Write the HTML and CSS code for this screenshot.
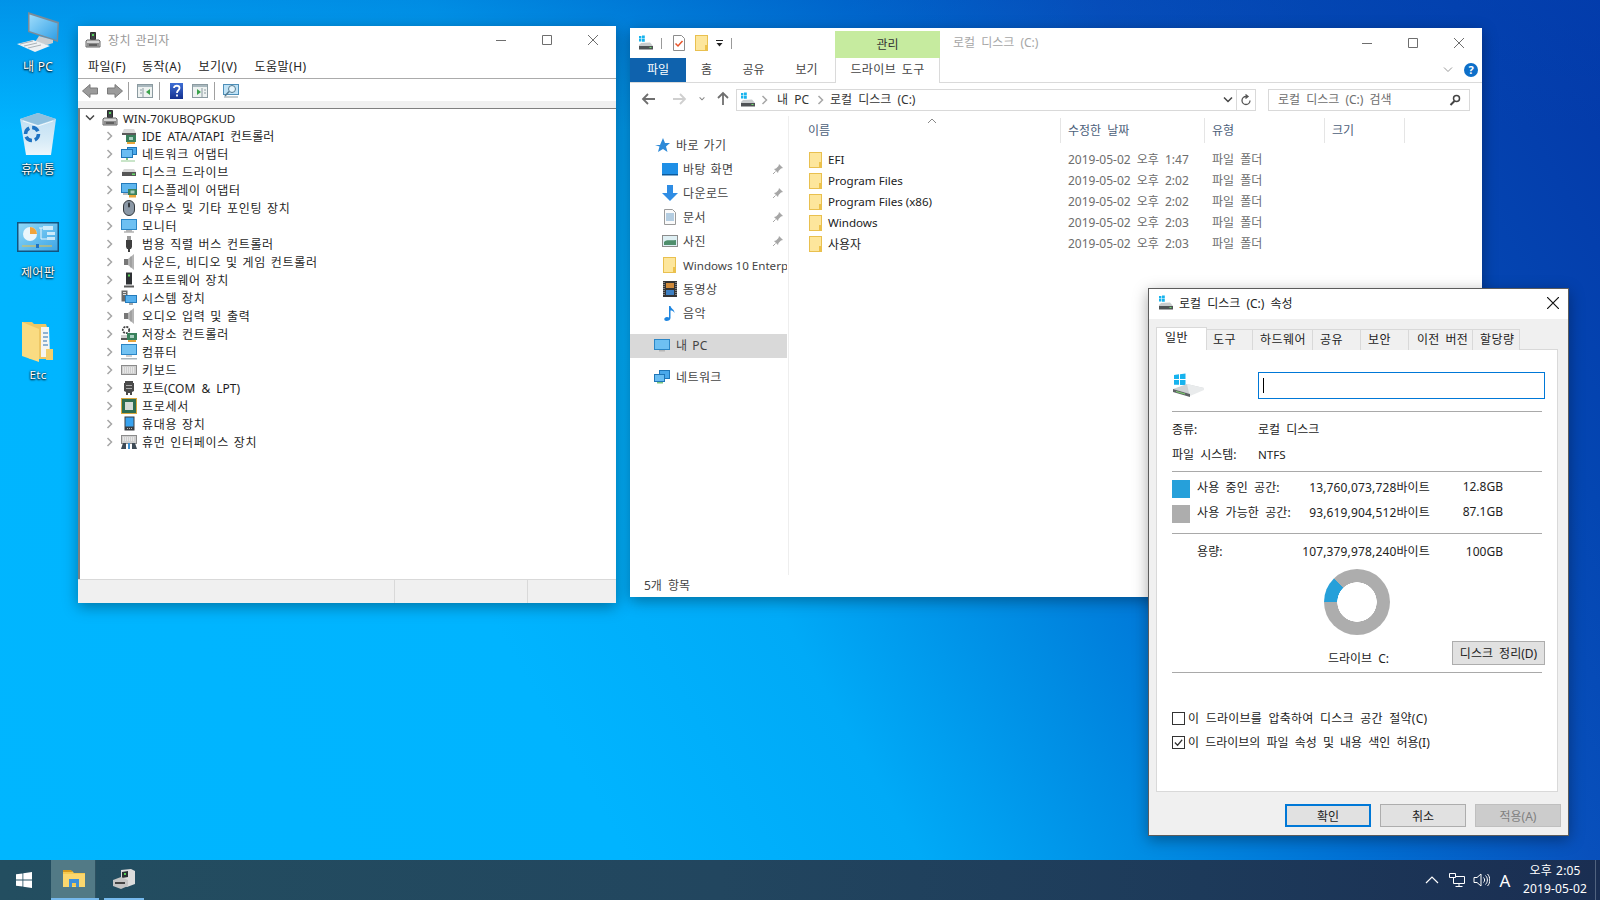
FILE: index.html
```html
<!DOCTYPE html>
<html lang="ko">
<head>
<meta charset="utf-8">
<title>Desktop</title>
<link rel="stylesheet" href="styles.css">
</head>
<body>
<svg class="defs" xmlns="http://www.w3.org/2000/svg">
  <defs>
    <linearGradient id="gScreen" x1="0" y1="0" x2="1" y2="1"><stop offset="0" stop-color="#9fdcfb"/><stop offset="1" stop-color="#2f9fe6"/></linearGradient>
    <linearGradient id="gBin" x1="0" y1="0" x2="0" y2="1"><stop offset="0" stop-color="#b9dcf2"/><stop offset=".65" stop-color="#d7ebf7"/><stop offset="1" stop-color="#eef6fb"/></linearGradient>
    <linearGradient id="gCp" x1="0" y1="0" x2="1" y2="1"><stop offset="0" stop-color="#8fd8f7"/><stop offset="1" stop-color="#3ea6e6"/></linearGradient>
    <linearGradient id="gHelp" x1="0" y1="0" x2="0" y2="1"><stop offset="0" stop-color="#3f6fd6"/><stop offset="1" stop-color="#14308f"/></linearGradient>
    <symbol id="folder" viewBox="0 0 13 16"><rect x=".5" y=".5" width="12" height="15" fill="#fde69c" stroke="#e9c04f"/><path d="M10 10h2v5h-2z" fill="#eec24a"/></symbol>
    <symbol id="drive" viewBox="0 0 16 16"><path d="M1 1h2.400v2.400H1zM4 .6h2.800V3.400H4zM1 4h2.400v2.400H1zM4 4h2.800v2.800H4z" fill="#17b3ee"/><path d="M3 8l9-.5 3 3.500v1.500H1V10z" fill="#c9ccce"/><path d="M1 11h14v3.500H1z" fill="#4f5255"/><path d="M11.500 12h2v1h-2z" fill="#6fe26a"/></symbol>
    <symbol id="devmgr" viewBox="0 0 16 16"><path d="M5.500.5h5v7h-5z" fill="#3f4346" stroke="#2c2c2c"/><path d="M7 2h2v2H7z" fill="#57d05a"/><path d="M2 8h12l1 1v6H1V9z" fill="#d6d6d6" stroke="#666"/><path d="M2 11h12v4H2z" fill="#8d8d8d"/><path d="M4 12.500h8v1H4z" fill="#333"/></symbol>
    <symbol id="ide" viewBox="0 0 16 16"><path d="M3 1h10l2 4H1z" fill="#d8d8d8"/><path d="M1 5h14v2H1z" fill="#5a5a5a"/><path d="M5 7h10v7H5z" fill="#39815c"/><path d="M8 9h4v3H8z" fill="#a8cfc0"/><path d="M6 14h8v2H6z" fill="#e7a53a"/></symbol>
    <symbol id="net" viewBox="0 0 16 16"><rect x="6.500" y="1.500" width="9" height="7" fill="#4aa8ea" stroke="#1f76b8"/><rect x=".5" y="3.500" width="11" height="8" fill="#69bdf2" stroke="#1f76b8"/><path d="M5 12h2v2H5z" fill="#7bc47f"/><path d="M0 14h14v2H0z" fill="#c9e5c9"/></symbol>
    <symbol id="disk" viewBox="0 0 16 16"><path d="M3 5h10l2 3H1z" fill="#d5d5d5"/><path d="M1 8h14v4H1z" fill="#565656"/><path d="M11 9.500h3v1.500h-3z" fill="#66dc66"/></symbol>
    <symbol id="display" viewBox="0 0 16 16"><rect x=".5" y="1.500" width="15" height="9" fill="#5fb6ee" stroke="#247bbb"/><path d="M2 11h5v2H2z" fill="#bcbcbc"/><path d="M7 7h9v6H7z" fill="#39815c"/><path d="M9.500 8.500h4v3h-4z" fill="#a8cfc0"/><path d="M8 13h7v2.500H8z" fill="#e7a53a"/></symbol>
    <symbol id="mouse" viewBox="0 0 16 16"><rect x="2.500" y=".5" width="11" height="15" rx="5.500" fill="#8b98a6" stroke="#33383d"/><rect x="7" y="2.500" width="2" height="5" rx="1" fill="#33383d"/></symbol>
    <symbol id="monitor" viewBox="0 0 16 16"><rect x=".5" y="1.500" width="15" height="10" fill="#6ec0f2" stroke="#2b86c6"/><path d="M5 12h6v1.500H5z" fill="#b5b5b5"/><path d="M3 13.500h10v1H3z" fill="#8c8c8c"/></symbol>
    <symbol id="usb" viewBox="0 0 16 16"><path d="M6 0h4v4H6z" fill="#9a9a9a"/><path d="M5 4h6v7l-1 2H6l-1-2z" fill="#3f3f3f"/><path d="M7 13h2v3H7z" fill="#3f3f3f"/></symbol>
    <symbol id="sound" viewBox="0 0 16 16"><path d="M3 5h4v6H3z" fill="#777"/><path d="M7 5l6-5v16l-6-5z" fill="#b4b4b4"/><path d="M10 2.500v11" stroke="#8d8d8d"/></symbol>
    <symbol id="software" viewBox="0 0 16 16"><path d="M5 .5h6v12H5z" fill="#2e3134"/><path d="M7 2.500h2v2H7z" fill="#5cd45f"/><path d="M3 13.500h10v2H3z" fill="#5a5a5a"/></symbol>
    <symbol id="system" viewBox="0 0 16 16"><path d="M.5.5h6v11h-6z" fill="#6a6a6a"/><path d="M2 2h3v1H2zM2 4h3v1H2z" fill="#ddd"/><rect x="4.500" y="5.500" width="11" height="7" fill="#55b0ee" stroke="#247bbb"/><path d="M8 13h4v2H8z" fill="#aaa"/></symbol>
    <symbol id="storage" viewBox="0 0 16 16"><circle cx="5" cy="4" r="3.200" fill="none" stroke="#444" stroke-width="1.800" stroke-dasharray="2 1"/><path d="M0 9h8v5H0z" fill="#cfcfcf"/><path d="M0 12h8v2H0z" fill="#555"/><path d="M6 7h10v7H6z" fill="#39815c"/><path d="M9 9h4v3H9z" fill="#a8cfc0"/><path d="M7 14h8v2H7z" fill="#e7a53a"/></symbol>
    <symbol id="computer" viewBox="0 0 16 16"><rect x=".5" y=".5" width="15" height="10" fill="#72c2f2" stroke="#2b86c6"/><path d="M5 11h6v2H5z" fill="#cfcfcf"/><path d="M0 14h16v1.500H0z" fill="#a8b4bb"/></symbol>
    <symbol id="keyboard" viewBox="0 0 16 16"><rect x=".5" y="3.500" width="15" height="9" fill="#cfcfcf" stroke="#8b8b8b"/><path d="M2 6h12M2 8h12M2 10h12" stroke="#fff" stroke-dasharray="1 1"/></symbol>
    <symbol id="port" viewBox="0 0 16 16"><path d="M4 1h8v2h1v8l-2 1v3H9v-2H7v2H5v-3l-2-1V3h1z" fill="#4a4a4a"/><path d="M5 5h6v1H5zM5 8h6v1H5z" fill="#a9a9a9"/></symbol>
    <symbol id="cpu" viewBox="0 0 16 16"><rect width="16" height="16" fill="#d9a93f"/><rect x="1" y="1" width="14" height="14" fill="#2f6d50"/><rect x="4" y="4" width="8" height="8" fill="#d5dcd8"/></symbol>
    <symbol id="portable" viewBox="0 0 16 16"><rect x="3.500" y=".5" width="10" height="14" fill="#3a3d40"/><rect x="4.500" y="1.500" width="8" height="9" fill="#38a2ee"/><path d="M6 12h1v1H6zM8 12h1v1H8zM10 12h1v1h-1z" fill="#bbb"/></symbol>
    <symbol id="hid" viewBox="0 0 16 16"><rect x=".5" y="1.500" width="15" height="8" fill="#cfcfcf" stroke="#8b8b8b"/><path d="M2 4h12M2 6h12" stroke="#fff" stroke-dasharray="1 1"/><path d="M2 9h3v6H0zM11 9h3l2 6h-5z" fill="#3e4a55"/><path d="M7 9h2v6H7z" fill="#3d8fd0"/></symbol>
    <symbol id="chev" viewBox="0 0 8 10"><path d="M1.500 1l4 4-4 4" fill="none" stroke="#a6a6a6" stroke-width="1.500"/></symbol>
    <symbol id="chevd" viewBox="0 0 10 8"><path d="M1 1.500l4 4 4-4" fill="none" stroke="#444" stroke-width="1.500"/></symbol>
    <symbol id="min" viewBox="0 0 10 10"><path d="M0 5.500h10" stroke="currentColor"/></symbol>
    <symbol id="max" viewBox="0 0 10 10"><path d="M.5.5h9v9h-9z" fill="none" stroke="currentColor"/></symbol>
    <symbol id="close" viewBox="0 0 10 10"><path d="M0 0l10 10M10 0L0 10" stroke="currentColor" fill="none"/></symbol>
    <symbol id="pin" viewBox="0 0 12 12"><path d="M7 1l4 4-2 .5-2.500 2.500-.5 2-4-4 2-.5L6.500 3z" fill="#a6a6a6"/><path d="M3.500 8.500L1 11" stroke="#a6a6a6"/></symbol>
    <symbol id="arrow" viewBox="0 0 16 16"><path d="M7 3l-5 5 5 5M2 8h12" fill="none" stroke="currentColor" stroke-width="1.800"/></symbol>
    <symbol id="winlogo" viewBox="0 0 16 16"><path d="M0 2.300l6.500-.9v6.200H0zM7.300 1.300L16 0v7.600H7.300zM0 8.400h6.500v6.200L0 13.700zM7.300 8.400H16V16l-8.700-1.200z" fill="#fff"/></symbol>
  </defs>
</svg>

<div class="screen">
  <main class="canvas">
    <a class="dicon d1">
      <svg class="ico-pc" viewBox="0 0 42 40"><path d="M11 0l31 10-1 20-30-10z" fill="#7a8b99"/><path d="M12.500 2.500l28 9-.8 16.500-27.200-9z" fill="url(#gScreen)"/><path d="M22 24l14 4v3l-6 2-12-3z" fill="#c9ced2"/><path d="M0 32l16-4 17 6-15 6z" fill="#eef1f3"/><path d="M3 32l13-3M7 34l13-3M11 36l13-3" stroke="#aab2b8"/></svg>
      <span class="dlabel dl1">내 PC</span>
    </a>
    <a class="dicon d2">
      <svg class="ico-bin" viewBox="0 0 38 43"><path d="M1 7l18-6 18 6-5 36H7z" fill="url(#gBin)"/><path d="M1 7l18 6 18-6-18-6z" fill="#8fc0de"/><path d="M4 9l15 5 15-5" fill="none" stroke="#f0f8fc"/><circle cx="13" cy="22" r="6.500" fill="none" stroke="#1d72c2" stroke-width="3.500" stroke-dasharray="7 3"/></svg>
      <span class="dlabel dl2">휴지통</span>
    </a>
    <a class="dicon d3">
      <svg class="ico-cp" viewBox="0 0 42 30"><rect width="42" height="30" fill="#12547f"/><rect x="1.500" y="1.500" width="39" height="27" fill="url(#gCp)"/><circle cx="13" cy="12" r="7" fill="#e9f6fc"/><path d="M13 12V5a7 7 0 0 1 7 7z" fill="#f0a43c"/><path d="M26 4h10v4H26zM30 10h8v3h-8zM30 15h8v3h-8z" fill="#e9f6fc" opacity=".8"/><path d="M22 6h4M24 6v11h6" stroke="#e9f6fc" fill="none"/><path d="M5 24h30" stroke="#f0c040"/><rect x="19" y="22" width="3" height="4" fill="#1d72c2"/></svg>
      <span class="dlabel dl3">제어판</span>
    </a>
    <a class="dicon d4">
      <svg class="ico-etc" viewBox="0 0 31 41"><path d="M0 1h10l2 2h12l1 3v32H8L0 32z" fill="#eec765"/><path d="M19 6h8l1 30H19z" fill="#f5f5f2"/><path d="M21 12h5M21 16h5M21 20h4M21 24h5" stroke="#6c9cc8" stroke-width="1.500"/><path d="M0 1l17 7v33L0 35z" fill="#fadb82"/><path d="M24 28h7v11H24z" fill="#f3cf6c"/></svg>
      <span class="dlabel dl4 en">Etc</span>
    </a>

    <section class="window devwin">
      <header class="titlebar">
        <svg class="ti16"><use href="#devmgr"/></svg>
        <span class="title-text">장치 관리자</span>
        <div class="wincontrols">
          <span class="wc"><svg class="w10"><use href="#min"/></svg></span>
          <span class="wc"><svg class="w10"><use href="#max"/></svg></span>
          <span class="wc"><svg class="w10"><use href="#close"/></svg></span>
        </div>
      </header>
      <nav class="menubar"><span class="m1">파일(F)</span><span class="m2">동작(A)</span><span class="m3">보기(V)</span><span class="m4">도움말(H)</span></nav>
      <div class="toolbar">
        <svg class="tb tb-first" viewBox="0 0 16 16"><path d="M.5 8L8 1.500V5h7.500v6H8v3.500z" fill="#9b9b9b" stroke="#7b7b7b"/></svg>
        <svg class="tb tb-next" viewBox="0 0 16 16"><path d="M15.500 8L8 1.500V5H.5v6H8v3.500z" fill="#9b9b9b" stroke="#7b7b7b"/></svg>
        <i class="tsep ts1"></i>
        <svg class="tb" viewBox="0 0 16 16"><rect x=".5" y="1.500" width="15" height="13" fill="#eef2f1" stroke="#8b9aa0"/><path d="M1 2h14v2H1z" fill="#a9b8be"/><path d="M6 5v9M3 7h2M3 10h2" stroke="#8b9aa0"/><path d="M13 6v6l-4-3z" fill="#3aa24a"/></svg>
        <i class="tsep"></i>
        <svg class="tb tb-help" viewBox="0 0 14 16"><rect width="13" height="16" fill="url(#gHelp)"/><path d="M4 5c0-3 5.500-3 5.500 0 0 2.500-2.500 2-2.500 5M7 11.500v2" fill="none" stroke="#fff" stroke-width="1.800"/></svg>
        <svg class="tb" viewBox="0 0 16 16"><rect x=".5" y="1.500" width="15" height="13" fill="#eef2f1" stroke="#8b9aa0"/><path d="M1 2h14v2H1z" fill="#a9b8be"/><path d="M10 5v9M12 7h2M12 10h2" stroke="#8b9aa0"/><path d="M5 6v6l4-3z" fill="#3aa24a"/></svg>
        <i class="tsep"></i>
        <svg class="tb" viewBox="0 0 16 16"><rect x=".5" y="1.500" width="15" height="10" fill="#bfe2f6" stroke="#4e8fb8"/><path d="M1 14h14" stroke="#8b9aa0"/><circle cx="9" cy="6" r="3.500" fill="#e6f5fc" stroke="#577c91"/><path d="M6 8.500L2 13" stroke="#577c91" stroke-width="1.500"/></svg>
      </div>
      <div class="band"></div>
      <div class="tree">
        <div class="row root"><svg class="chevd"><use href="#chevd"/></svg><svg class="ti16 tico"><use href="#devmgr"/></svg><span class="en root-text">WIN-70KUBQPGKUD</span></div>
        <div class="row child"><svg class="chev"><use href="#chev"/></svg><svg class="ti16 tico"><use href="#ide"/></svg><span class="txt mix">IDE ATA/ATAPI 컨트롤러</span></div>
        <div class="row child"><svg class="chev"><use href="#chev"/></svg><svg class="ti16 tico"><use href="#net"/></svg><span class="txt">네트워크 어댑터</span></div>
        <div class="row child"><svg class="chev"><use href="#chev"/></svg><svg class="ti16 tico"><use href="#disk"/></svg><span class="txt">디스크 드라이브</span></div>
        <div class="row child"><svg class="chev"><use href="#chev"/></svg><svg class="ti16 tico"><use href="#display"/></svg><span class="txt">디스플레이 어댑터</span></div>
        <div class="row child"><svg class="chev"><use href="#chev"/></svg><svg class="ti16 tico"><use href="#mouse"/></svg><span class="txt">마우스 및 기타 포인팅 장치</span></div>
        <div class="row child"><svg class="chev"><use href="#chev"/></svg><svg class="ti16 tico"><use href="#monitor"/></svg><span class="txt">모니터</span></div>
        <div class="row child"><svg class="chev"><use href="#chev"/></svg><svg class="ti16 tico"><use href="#usb"/></svg><span class="txt">범용 직렬 버스 컨트롤러</span></div>
        <div class="row child"><svg class="chev"><use href="#chev"/></svg><svg class="ti16 tico"><use href="#sound"/></svg><span class="txt">사운드, 비디오 및 게임 컨트롤러</span></div>
        <div class="row child"><svg class="chev"><use href="#chev"/></svg><svg class="ti16 tico"><use href="#software"/></svg><span class="txt">소프트웨어 장치</span></div>
        <div class="row child"><svg class="chev"><use href="#chev"/></svg><svg class="ti16 tico"><use href="#system"/></svg><span class="txt">시스템 장치</span></div>
        <div class="row child"><svg class="chev"><use href="#chev"/></svg><svg class="ti16 tico"><use href="#sound"/></svg><span class="txt">오디오 입력 및 출력</span></div>
        <div class="row child"><svg class="chev"><use href="#chev"/></svg><svg class="ti16 tico"><use href="#storage"/></svg><span class="txt">저장소 컨트롤러</span></div>
        <div class="row child"><svg class="chev"><use href="#chev"/></svg><svg class="ti16 tico"><use href="#computer"/></svg><span class="txt">컴퓨터</span></div>
        <div class="row child"><svg class="chev"><use href="#chev"/></svg><svg class="ti16 tico"><use href="#keyboard"/></svg><span class="txt">키보드</span></div>
        <div class="row child"><svg class="chev"><use href="#chev"/></svg><svg class="ti16 tico"><use href="#port"/></svg><span class="txt mix">포트(COM &amp; LPT)</span></div>
        <div class="row child"><svg class="chev"><use href="#chev"/></svg><svg class="ti16 tico"><use href="#cpu"/></svg><span class="txt">프로세서</span></div>
        <div class="row child"><svg class="chev"><use href="#chev"/></svg><svg class="ti16 tico"><use href="#portable"/></svg><span class="txt">휴대용 장치</span></div>
        <div class="row child"><svg class="chev"><use href="#chev"/></svg><svg class="ti16 tico"><use href="#hid"/></svg><span class="txt">휴먼 인터페이스 장치</span></div>
      </div>
      <footer class="devstatus"><i class="ds1"></i><i class="ds2"></i><i class="ds3"></i></footer>
    </section>

    <section class="window exwin">
      <header class="extitle">
        <div class="qat">
          <svg class="ti16 q-drive"><use href="#drive"/></svg><i class="qsep qs1"></i>
          <svg class="q-check" viewBox="0 0 12 16"><path d="M.5.5h8l3 3v12H.5z" fill="#fff" stroke="#8c8c8c"/><path d="M2.500 8.500l2.500 2.500 4.500-5" fill="none" stroke="#e8542a" stroke-width="1.500"/></svg>
          <svg class="q-folder"><use href="#folder"/></svg>
          <svg class="q-drop" viewBox="0 0 7 7"><path d="M0 0h7v1H0zM.5 3h6L3.500 6.500z" fill="#222"/></svg><i class="qsep qs2"></i>
        </div>
        <div class="manage">관리</div>
        <span class="extitle-text">로컬 디스크 (C:)</span>
        <div class="wincontrols">
          <span class="wc"><svg class="w10"><use href="#min"/></svg></span>
          <span class="wc"><svg class="w10"><use href="#max"/></svg></span>
          <span class="wc"><svg class="w10"><use href="#close"/></svg></span>
        </div>
      </header>
      <div class="ribbontabs">
        <span class="rt rt-file">파일</span><span class="rt rt-home">홈</span><span class="rt rt-share">공유</span><span class="rt rt-view">보기</span><span class="rt rt-tool">드라이브 도구</span>
        <svg class="rib-chev" viewBox="0 0 10 8"><path d="M1 1.500l4 4 4-4" fill="none" stroke="#999"/></svg>
        <span class="rib-help">?</span>
      </div>
      <div class="navrow">
        <svg class="nb nb-back"><use href="#arrow"/></svg>
        <svg class="nb nb-fwd"><use href="#arrow"/></svg>
        <svg class="nb-drop" viewBox="0 0 10 8"><path d="M2 2l3 3 3-3" fill="none" stroke="#888" stroke-width="1.300"/></svg>
        <svg class="nb nb-up"><use href="#arrow"/></svg>
        <div class="addr">
          <svg class="ti16 addr-ico"><use href="#drive"/></svg>
          <svg class="crumb c1st"><use href="#chev"/></svg><span class="c-pc">내 PC</span>
          <svg class="crumb"><use href="#chev"/></svg><span class="c-drive">로컬 디스크 (C:)</span>
          <svg class="addr-chev"><use href="#chevd"/></svg>
          <span class="addr-ref"><svg viewBox="0 0 12 12" class="ref-ico"><path d="M10 6.500A4 4 0 1 1 6 2.500h1M5.500.5L8 2.500 5.500 4.500" fill="none" stroke="#555" stroke-width="1.300"/></svg></span>
        </div>
        <div class="search"><span>로컬 디스크 (C:) 검색</span><svg class="mag" viewBox="0 0 12 12"><circle cx="7.500" cy="4.500" r="3" fill="none" stroke="#444" stroke-width="1.500"/><path d="M5.500 7L1.500 11" stroke="#444" stroke-width="2"/></svg></div>
      </div>
      <div class="exbody">
        <aside class="navpane">
          <div class="np top"><svg class="ni" viewBox="0 0 16 16"><path d="M9 1l2 5h5l-4 3.500 1.500 5.500L9 12l-5 3 1.500-5.500L1 8h5z" fill="#2d8ad8"/></svg><span>바로 가기</span></div>
          <div class="np sub"><svg class="ni" viewBox="0 0 16 16"><rect y="2" width="16" height="11" fill="#1f8fe6"/><path d="M0 13h16v1.500H0z" fill="#0c5a9c"/></svg><span class="fx">바탕 화면</span><svg class="pin"><use href="#pin"/></svg></div>
          <div class="np sub"><svg class="ni" viewBox="0 0 16 16"><path d="M5 0h6v8h5l-8 8-8-8h5z" fill="#2f8de4"/></svg><span class="fx">다운로드</span><svg class="pin"><use href="#pin"/></svg></div>
          <div class="np sub"><svg class="ni" viewBox="0 0 16 16"><path d="M2.500.5h8l3 3v12h-11z" fill="#fafafa" stroke="#9a9a9a"/><path d="M4 5h8M4 7h8M4 9h8M4 11h8" stroke="#6fa0c8"/></svg><span class="fx">문서</span><svg class="pin"><use href="#pin"/></svg></div>
          <div class="np sub"><svg class="ni" viewBox="0 0 16 16"><rect x=".5" y="2.500" width="15" height="11" fill="#dff0f4" stroke="#8c8c8c"/><path d="M2 9c3-3 6-1 12-2v5H2z" fill="#4f8f6c"/></svg><span class="fx">사진</span><svg class="pin"><use href="#pin"/></svg></div>
          <div class="np sub"><svg class="ni-f"><use href="#folder"/></svg><span class="en">Windows 10 Enterprise</span></div>
          <div class="np sub"><svg class="ni" viewBox="0 0 16 16"><rect x="1" width="14" height="16" fill="#333"/><path d="M4 2h8v5H4z" fill="#d08a3a"/><path d="M4 9h8v5H4z" fill="#3d7fc2"/><path d="M2 1v14M14 1v14" stroke="#ccc" stroke-dasharray="1 1"/></svg><span>동영상</span></div>
          <div class="np sub"><svg class="ni" viewBox="0 0 16 16"><path d="M7 1h1.500c.5 3 4 3 4 7-1-2-2.500-2.500-4-2.500V13c0 2-2 3-4 3-3 0-3-4 .5-4 .8 0 1.500.2 2 .6z" fill="#1f86e0"/></svg><span>음악</span></div>
          <div class="np top sel"><svg class="ni" viewBox="0 0 16 16"><rect x=".5" y="1.500" width="15" height="10" fill="#6ec0f2" stroke="#2b86c6"/><path d="M5 12h6v1.500H5z" fill="#b5b5b5"/></svg><span>내 PC</span></div>
          <div class="np top netw"><svg class="ni" viewBox="0 0 16 16"><rect x="5.500" y="1.500" width="10" height="8" fill="#4aa8ea" stroke="#1f76b8"/><rect x=".5" y="5.500" width="10" height="7" fill="#69bdf2" stroke="#1f76b8"/><path d="M3 13h6v1.500H3z" fill="#7bc47f"/></svg><span>네트워크</span></div>
        </aside>
        <div class="list">
          <div class="lhead">
            <span class="lh lh-name">이름<svg class="sortcaret" viewBox="0 0 10 6"><path d="M1 5l4-4 4 4" fill="none" stroke="#888"/></svg></span>
            <span class="lh">수정한 날짜</span><span class="lh">유형</span><span class="lh">크기</span>
          </div>
          <div class="lrow"><span class="lname"><svg class="lf"><use href="#folder"/></svg><span class="en">EFI</span></span><span class="lcell">2019-05-02 오후 1:47</span><span class="lcell">파일 폴더</span></div>
          <div class="lrow"><span class="lname"><svg class="lf"><use href="#folder"/></svg><span class="en">Program Files</span></span><span class="lcell">2019-05-02 오후 2:02</span><span class="lcell">파일 폴더</span></div>
          <div class="lrow"><span class="lname"><svg class="lf"><use href="#folder"/></svg><span class="en">Program Files (x86)</span></span><span class="lcell">2019-05-02 오후 2:02</span><span class="lcell">파일 폴더</span></div>
          <div class="lrow"><span class="lname"><svg class="lf"><use href="#folder"/></svg><span class="en">Windows</span></span><span class="lcell">2019-05-02 오후 2:03</span><span class="lcell">파일 폴더</span></div>
          <div class="lrow"><span class="lname"><svg class="lf"><use href="#folder"/></svg><span>사용자</span></span><span class="lcell">2019-05-02 오후 2:03</span><span class="lcell">파일 폴더</span></div>
        </div>
      </div>
      <footer class="exstatus">5개 항목</footer>
    </section>

    <section class="dialog">
      <header class="dtitle">
        <svg class="ti16"><use href="#drive"/></svg>
        <span class="dtitle-text">로컬 디스크 (C:) 속성</span>
        <span class="dclose"><svg class="w12"><use href="#close"/></svg></span>
      </header>
      <div class="dtabs">
        <span class="dt active">일반</span><span class="dt w46">도구</span><span class="dt w60">하드웨어</span><span class="dt w48">공유</span><span class="dt w48">보안</span><span class="dt w64">이전 버전</span><span class="dt w47">할당량</span>
      </div>
      <div class="panel">
        <div class="phead">
          <svg class="bigdrive" viewBox="0 0 32 27"><path d="M1 3l5-.7V7H1zM7 2.200l5.500-.8V7H7zM1 8h5v4.800H1zM7 8h5.500v5H7z" fill="#17b3ee"/><path d="M0 17l14-5 17 4-14 6z" fill="#cfd2d4"/><path d="M14 12l17 4v2l-14 6-1-3z" fill="#e9ebec"/><path d="M0 17l17 5v3L0 20z" fill="#5e6265"/><path d="M3 19l9 2.500v1L3 20z" fill="#7fd86f"/></svg>
          <div class="nameinput"><i class="caret"></i></div>
        </div>
        <hr class="sep s1">
        <div class="kv kv1"><span class="k">종류:</span><span>로컬 디스크</span></div>
        <div class="kv kv2"><span class="k">파일 시스템:</span><span class="en">NTFS</span></div>
        <hr class="sep s2">
        <div class="sp"><i class="sw used"></i><span class="sl">사용 중인 공간:</span><span class="sb">13,760,073,728바이트</span><span class="sg">12.8GB</span></div>
        <div class="sp"><i class="sw free"></i><span class="sl">사용 가능한 공간:</span><span class="sb">93,619,904,512바이트</span><span class="sg">87.1GB</span></div>
        <hr class="sep s3">
        <div class="sp cap"><i class="sw none"></i><span class="sl">용량:</span><span class="sb">107,379,978,240바이트</span><span class="sg">100GB</span></div>
        <div class="donut"></div>
        <div class="drvrow"><span class="drvlabel">드라이브 C:</span><button class="btn cleanup">디스크 정리(D)</button></div>
        <hr class="sep s4">
        <label class="chk c1"><i class="box"></i><span>이 드라이브를 압축하여 디스크 공간 절약(C)</span></label>
        <label class="chk"><i class="box"><svg viewBox="0 0 12 12" class="tick"><path d="M2 6l3 3 5-6" fill="none" stroke="#333" stroke-width="1.300"/></svg></i><span>이 드라이브의 파일 속성 및 내용 색인 허용(I)</span></label>
      </div>
      <footer class="dfoot">
        <button class="btn act default">확인</button><button class="btn act">취소</button><button class="btn act disabled">적용(A)</button>
      </footer>
    </section>
  </main>

  <footer class="taskbar">
    <span class="start"><svg class="win"><use href="#winlogo"/></svg></span>
    <span class="task explorer"><svg class="task-ico" viewBox="0 0 22 18"><path d="M0 1h9l2 2h11v14H0z" fill="#f6c94f"/><path d="M0 0h8l2 2H0z" fill="#d89a1d"/><path d="M0 4h22v13H0z" fill="#fbd76e"/><path d="M6 17V9h10v8h-3v-4H9v4z" fill="#3f8fd8"/><path d="M9 13h4v3H9z" fill="#f6c94f"/></svg></span>
    <span class="task devm"><svg class="task-ico2" viewBox="0 0 22 20"><path d="M8 1l10-1 4 2v13l-8 3-6-3z" fill="#dcdcdc"/><path d="M9 3l6-1v6l-6 1z" fill="#2a2f33"/><path d="M11 4h2v2h-2z" fill="#53d155"/><path d="M0 11l8-3 7 3v6l-7 3-8-3z" fill="#c4c4c4"/><path d="M2 13h10v2H2z" fill="#444"/></svg></span>
    <div class="tray">
      <svg class="tr-up" viewBox="0 0 14 8"><path d="M1 7l6-6 6 6" fill="none" stroke="#fff" stroke-width="1.200"/></svg>
      <svg class="tr-net" viewBox="0 0 16 14"><path d="M4.500 3.500h11v7h-11zM10 10.500v3M6.500 13.500h7" fill="none" stroke="#fff"/><path d="M.5.5h6v4h-6z" fill="#1b2f52" stroke="#fff"/></svg>
      <svg class="tr-vol" viewBox="0 0 17 14"><path d="M1 4.500h3L8 1v12L4 9.500H1z" fill="none" stroke="#fff"/><path d="M10.500 4.500c1.500 1.500 1.500 3.500 0 5M12.500 2.500c2.500 2.500 2.500 6.500 0 9M14.500 1c3 3 3 9 0 12" fill="none" stroke="#fff"/></svg>
      <span class="tr-ime en">A</span>
      <div class="clock"><span>오후 2:05</span><span>2019-05-02</span></div>
      <i class="showdesk"></i>
    </div>
  </footer>
</div>
</body>
</html>
```

FILE: styles.css
```css
* { box-sizing: border-box; }
html, body { margin: 0; padding: 0; }
body {
  width: 1600px; height: 900px; overflow: hidden;
  font-family: "Noto Sans", "Noto Sans CJK KR", sans-serif;
  font-size: 12px; color: #222; word-spacing: 3px;
}
svg { display: block; flex: none; }
.defs { position: absolute; width: 0; height: 0; }
.en { word-spacing: 0; letter-spacing: 0; font-size: 11.6px; }
i { display: block; flex: none; }

.screen { width: 1600px; height: 900px; display: flex; flex-direction: column; }
.canvas {
  position: relative; flex: 1;
  background:
    linear-gradient(180deg, rgba(0,70,180,.3) 0, rgba(0,70,180,0) 130px),
    linear-gradient(60deg, #00b6ff 0, #00b4ff 30%, #00aaf7 44%, #008ce3 55%, #0072d5 64%, #0850bc 76%, #0446b2 86%, #0438a8 100%);
}

/* desktop icons */
.dicon { position: absolute; left: 0; width: 76px; top: 0; height: 90px; color: #fff; display: block; }
.d1 { top: 12px; } .d2 { top: 112px; } .d3 { top: 222px; } .d4 { top: 321px; }
.dlabel { position: absolute; left: 0; width: 76px; text-align: center; line-height: 16px; text-shadow: 0 1px 2px #000, 0 0 2px rgba(0,0,0,.7); word-spacing: 0; letter-spacing: .3px; }
.dl1 { top: 47px; } .dl2 { top: 50px; } .dl3 { top: 43px; } .dl4 { top: 46px; }
.ico-pc { position: absolute; left: 17px; top: 0; width: 42px; height: 40px; }
.ico-bin { position: absolute; left: 19px; top: 0; width: 38px; height: 43px; }
.ico-cp { position: absolute; left: 17px; top: 0; width: 42px; height: 30px; }
.ico-etc { position: absolute; left: 22px; top: 0; width: 31px; height: 41px; }

/* shared */
.window { position: absolute; background: #fff; display: flex; flex-direction: column; box-shadow: 0 4px 14px rgba(0,0,0,.35); }
.ti16 { width: 16px; height: 16px; }
.w10 { width: 10px; height: 10px; }
.w12 { width: 12px; height: 12px; }
.wincontrols { margin-left: auto; display: flex; color: #6e6e6e; }
.wc { width: 46px; display: flex; justify-content: center; align-items: center; }

/* device manager */
.devwin { left: 78px; top: 26px; width: 538px; height: 577px; }
.titlebar { height: 27px; display: flex; align-items: center; padding-left: 7px; flex: none; }
.title-text { margin-left: 7px; color: #999; letter-spacing: .4px; word-spacing: 1px; }
.titlebar .wincontrols { height: 100%; margin-top: 0; }
.menubar { height: 26px; border-bottom: 1px solid #ababab; display: flex; align-items: center; flex: none; color: #222; word-spacing: 0; letter-spacing: .5px; }
.menubar span { display: block; }
.m1 { margin-left: 10px; } .m2 { margin-left: 16px; } .m3 { margin-left: 17px; } .m4 { margin-left: 17px; }
.toolbar { height: 22px; padding-top: 2px; display: flex; align-items: center; flex: none; }
.tb { width: 16px; height: 16px; margin-left: 8px; }
.tb-first { margin-left: 4px; }
.tb-next { margin-left: 9px; }
.tb-help { width: 14px; margin-left: 10px; }
.tsep { width: 1px; height: 18px; background: #a0a0a0; margin-left: 6px; }
.ts1 { margin-left: 5px; }
.tsep + .tb { margin-left: 8px; }
.tsep + .tb-help { margin-left: 10px; }
.band { height: 7px; background: #f0f0f0; flex: none; }
.tree { flex: 1; border-top: 1px solid #7f7f7f; border-left: 2px solid #7f7f7f; min-height: 0; }
.row { height: 18px; display: flex; align-items: center; color: #1f1f1f; white-space: nowrap; }
.root { padding-left: 6px; }
.chevd { width: 10px; height: 8px; margin-left: -1px; }
.root .tico { margin-left: 7px; }
.root-text { margin-left: 5px; }
.child { padding-left: 26px; }
.chev { width: 8px; height: 10px; }
.child .tico { margin-left: 7px; }
.txt { margin-left: 5px; letter-spacing: .7px; word-spacing: 1px; }
.txt.mix { letter-spacing: 0; word-spacing: 3px; }
.devstatus { height: 24px; background: #f0f0f0; border-top: 1px solid #d9d9d9; display: flex; flex: none; }
.ds1 { width: 317px; border-right: 1px solid #d9d9d9; }
.ds2 { width: 133px; border-right: 1px solid #d9d9d9; }
.ds3 { flex: 1; }

/* explorer */
.exwin { left: 630px; top: 28px; width: 852px; height: 569px; color: #444; }
.extitle { height: 30px; display: flex; flex: none; }
.qat { width: 205px; display: flex; align-items: center; }
.q-drive { margin-left: 8px; }
.qsep { width: 1px; height: 11px; background: #9a9a9a; }
.qs1 { margin-left: 7px; }
.q-check { width: 12px; height: 16px; margin-left: 11px; }
.q-folder { width: 13px; height: 16px; margin-left: 10px; }
.q-drop { width: 7px; height: 7px; margin-left: 8px; }
.qs2 { margin-left: 8px; }
.manage { width: 105px; margin-top: 3px; height: 27px; padding-bottom: 2px; background: #c6eb9f; display: flex; align-items: center; justify-content: center; color: #333; }
.extitle-text { margin-left: 13px; line-height: 30px; color: #a6a6a6; }
.ribbontabs { height: 25px; display: flex; align-items: stretch; border-bottom: 1px solid #dadada; flex: none; }
.rt { display: flex; align-items: center; justify-content: center; height: 24px; padding-bottom: 2px; flex: none; }
.rt-file { width: 56px; background: #0f62ad; color: #fff; }
.rt-home { width: 41px; } .rt-share { width: 53px; } .rt-view { width: 53px; }
.rt-tool { width: 105px; margin-left: 2px; border-left: 1px solid #dadada; border-right: 1px solid #dadada; background: #fff; height: 25px; letter-spacing: .4px; word-spacing: 2px; padding-bottom: 4px; }
.rib-chev { width: 10px; height: 8px; margin: 8px 0 0 auto; }
.rib-help { width: 14px; height: 14px; border-radius: 50%; background: #0d6fc9; color: #fff; margin: 5px 4px 0 11px; text-align: center; line-height: 14px; font-size: 11px; font-weight: 700; }
.navrow { height: 33px; display: flex; align-items: flex-start; flex: none; }
.nb { width: 16px; height: 16px; margin-top: 8px; color: #6f6f6f; }
.nb-back { margin-left: 11px; }
.nb-fwd { margin-left: 14px; color: #cfcfcf; transform: scaleX(-1); }
.nb-drop { width: 8px; height: 8px; margin: 12px 0 0 11px; }
.nb-up { margin-left: 9px; transform: rotate(90deg); }
.addr { margin: 6px 0 0 5px; width: 520px; height: 22px; border: 1px solid #d9d9d9; display: flex; align-items: center; padding-left: 3px; color: #333; }
.addr span.c-pc, .addr span.c-drive { margin-bottom: 2px; }
.addr-ico { margin-right: 5px; }
.crumb { width: 8px; height: 10px; margin-right: 5px; }
.c1st { margin-right: 8px; }
.c-pc { margin-right: 8px; }
.c-drive { margin-right: auto; }
.addr-chev { width: 10px; height: 8px; margin-right: 3px; }
.addr-ref { width: 19px; height: 20px; border-left: 1px solid #d9d9d9; display: flex; align-items: center; justify-content: center; }
.ref-ico { width: 12px; height: 12px; }
.search { margin: 6px 0 0 12px; width: 202px; height: 22px; border: 1px solid #d9d9d9; display: flex; align-items: center; padding: 0 8px 0 9px; color: #6d6d6d; justify-content: space-between; }
.search span { margin-bottom: 2px; }
.mag { width: 12px; height: 12px; }
.exbody { flex: 1; display: flex; min-height: 0; }
.navpane { width: 159px; border-right: 1px solid #eee; padding-top: 17px; flex: none; overflow: hidden; letter-spacing: .4px; word-spacing: 1.2px; }
.np { height: 24px; width: 157px; display: flex; align-items: center; white-space: nowrap; overflow: hidden; }
.np.top { padding-left: 24px; }
.np.sub { padding-left: 32px; }
.ni { width: 16px; height: 16px; }
.ni-f { width: 13px; height: 16px; margin-right: 2px; margin-left: 1px; }
.np.top span { margin-left: 6px; }
.np.sub span { margin-left: 5px; }
.fx { flex: 1; }
.pin { width: 12px; height: 12px; margin-right: 3px; }
.sel { background: #d9d9d9; margin-top: 9px; }
.sel span { margin-bottom: 2px; }
.netw { margin-top: 7px; }
.list { flex: 1; min-width: 0; }
.lhead { display: grid; grid-template-columns: 272px 144px 120px 80px; height: 27px; padding-top: 2px; color: #4c607a; }
.lh { padding-left: 7px; border-right: 1px solid #e5e5e5; line-height: 25px; position: relative; }
.lh-name { padding-left: 19px; }
.sortcaret { position: absolute; left: 138px; top: 0; width: 10px; height: 6px; }
.lrow { display: grid; grid-template-columns: 272px 144px 120px 80px; height: 21px; align-items: center; }
.lhead + .lrow { margin-top: 6px; }
.lname { display: flex; align-items: center; padding-left: 20px; color: #222; }
.lf { width: 13px; height: 16px; margin-right: 6px; }
.lcell { padding-left: 7px; color: #6d6d6d; white-space: nowrap; margin-bottom: 2px; }
.exstatus { height: 22px; flex: none; padding-left: 14px; line-height: 22px; color: #444; }

/* dialog */
.dialog { position: absolute; left: 1148px; top: 288px; width: 421px; height: 548px; background: #f0f0f0; border: 1px solid #5c5c5c; box-shadow: 0 4px 14px rgba(0,0,0,.35); display: flex; flex-direction: column; color: #222; }
.dtitle { height: 30px; padding-bottom: 3px; background: #fff; display: flex; align-items: center; padding-left: 9px; flex: none; }
.dtitle-text { margin-left: 5px; }
.dclose { margin-left: auto; width: 31px; display: flex; justify-content: center; color: #111; }
.dtabs { margin: 8px 0 0 7px; height: 23px; display: flex; align-items: flex-end; flex: none; position: relative; z-index: 1; }
.dt { height: 21px; background: #f0f0f0; border: 1px solid #d9d9d9; border-left: 0; border-bottom: 0; display: flex; align-items: center; padding: 0 0 2px 7px; flex: none; letter-spacing: .5px; white-space: nowrap; }
.dt.active { width: 51px; height: 23px; background: #fff; border-left: 1px solid #d9d9d9; padding: 0 0 5px 8px; }
.w46 { width: 46px; padding-left: 6px; } .w60 { width: 60px; } .w48 { width: 48px; } .w64 { width: 64px; padding-left: 8px; letter-spacing: .1px; } .w47 { width: 47px; }
.panel { margin: -1px 0 0 7px; width: 402px; height: 443px; background: #fff; border: 1px solid #d9d9d9; padding: 0 12px 0 15px; flex: none; }
.phead { margin-top: 22px; height: 27px; display: flex; }
.bigdrive { width: 32px; height: 27px; margin-left: 1px; }
.nameinput { margin-left: 53px; width: 287px; height: 27px; border: 1px solid #0078d7; padding: 5px 0 0 4px; }
.caret { width: 1px; height: 15px; background: #000; }
.sep { border: 0; height: 1px; background: #a9a9a9; margin: 0 3px 0 0; }
.s1 { margin-top: 12px; } .s2 { margin-top: 3px; } .s3 { margin-top: 7px; } .s4 { margin-top: 7px; }
.kv { height: 26px; display: flex; align-items: center; }
.kv1 { margin-top: 4px; }
.kv2 span { margin-bottom: 2px; }
.k { width: 86px; flex: none; }
.sp { height: 25px; display: flex; align-items: center; word-spacing: 3px; }
.sp span { margin-bottom: 4px; }
.s2 + .sp { margin-top: 4px; }
.cap { height: 26px; margin-top: 4px; }
.cap span { margin-bottom: 0; }
.sw { width: 18px; height: 18px; }
.used { background: #26a0da; }
.free { background: #adadad; }
.none { background: transparent; }
.sl { margin-left: 7px; width: 100px; white-space: nowrap; flex: none; letter-spacing: .1px; }
.sb { width: 133px; text-align: right; flex: none; white-space: nowrap; letter-spacing: .15px; }
.sg { width: 73px; text-align: right; flex: none; }
.donut { margin: 5px 0 0 152px; width: 66px; height: 66px; border-radius: 50%; background: radial-gradient(circle, #fff 0, #fff 19.500px, transparent 20px), conic-gradient(from 270deg, #26a0da 0 46deg, #adadad 46deg 360deg); }
.drvrow { margin-top: 6px; height: 24px; display: grid; }
.drvlabel { grid-area: 1 / 1; justify-self: center; align-self: end; line-height: 12px; }
.btn { font: inherit; word-spacing: 3px; color: #222; background: #e1e1e1; border: 1px solid #adadad; padding: 0; height: 23px; }
.cleanup { grid-area: 1 / 1; justify-self: end; width: 93px; height: 24px; }
.chk { height: 24px; display: flex; align-items: center; }
.c1 { margin-top: 33px; letter-spacing: .25px; }
.box { width: 13px; height: 13px; border: 1px solid #333; margin-right: 3px; background: #fff; }
.tick { width: 11px; height: 11px; }
.dfoot { margin-top: 12px; padding-right: 7px; display: flex; justify-content: flex-end; gap: 9px; }
.act { width: 86px; }
.default { border: 2px solid #0078d7; }
.disabled { background: #ccc; border-color: #bfbfbf; color: #808080; }

/* taskbar */
.taskbar { height: 40px; flex: none; display: flex; color: #fff; background: linear-gradient(90deg, #234e60 0, #22465f 45%, #1d3a5a 75%, #1a2e52 100%); }
.start { width: 51px; display: flex; align-items: center; padding-left: 16px; }
.win { width: 16px; height: 16px; }
.task { display: flex; align-items: center; justify-content: center; border-bottom: 2px solid #76b9ed; }
.explorer { width: 48px; background: linear-gradient(90deg, #527a86 0 44px, #2e5161 44px 45px, #234e60 45px); }
.devm { width: 40px; margin-left: 5px; }
.task-ico { width: 22px; height: 18px; margin-right: 3px; }
.task-ico2 { width: 22px; height: 20px; }
.tray { margin-left: auto; display: flex; align-items: center; }
.tr-up { width: 14px; height: 8px; margin-right: 10px; }
.tr-net { width: 16px; height: 14px; margin-right: 8px; }
.tr-vol { width: 17px; height: 14px; margin-right: 7px; }
.tr-ime { font-size: 17px; width: 16px; text-align: center; margin-right: 9px; }
.clock { display: flex; flex-direction: column; align-items: center; line-height: 18px; width: 66px; word-spacing: 1px; letter-spacing: .15px; }
.showdesk { width: 1px; height: 40px; background: #51637f; margin: 0 4px 0 7px; }
```
